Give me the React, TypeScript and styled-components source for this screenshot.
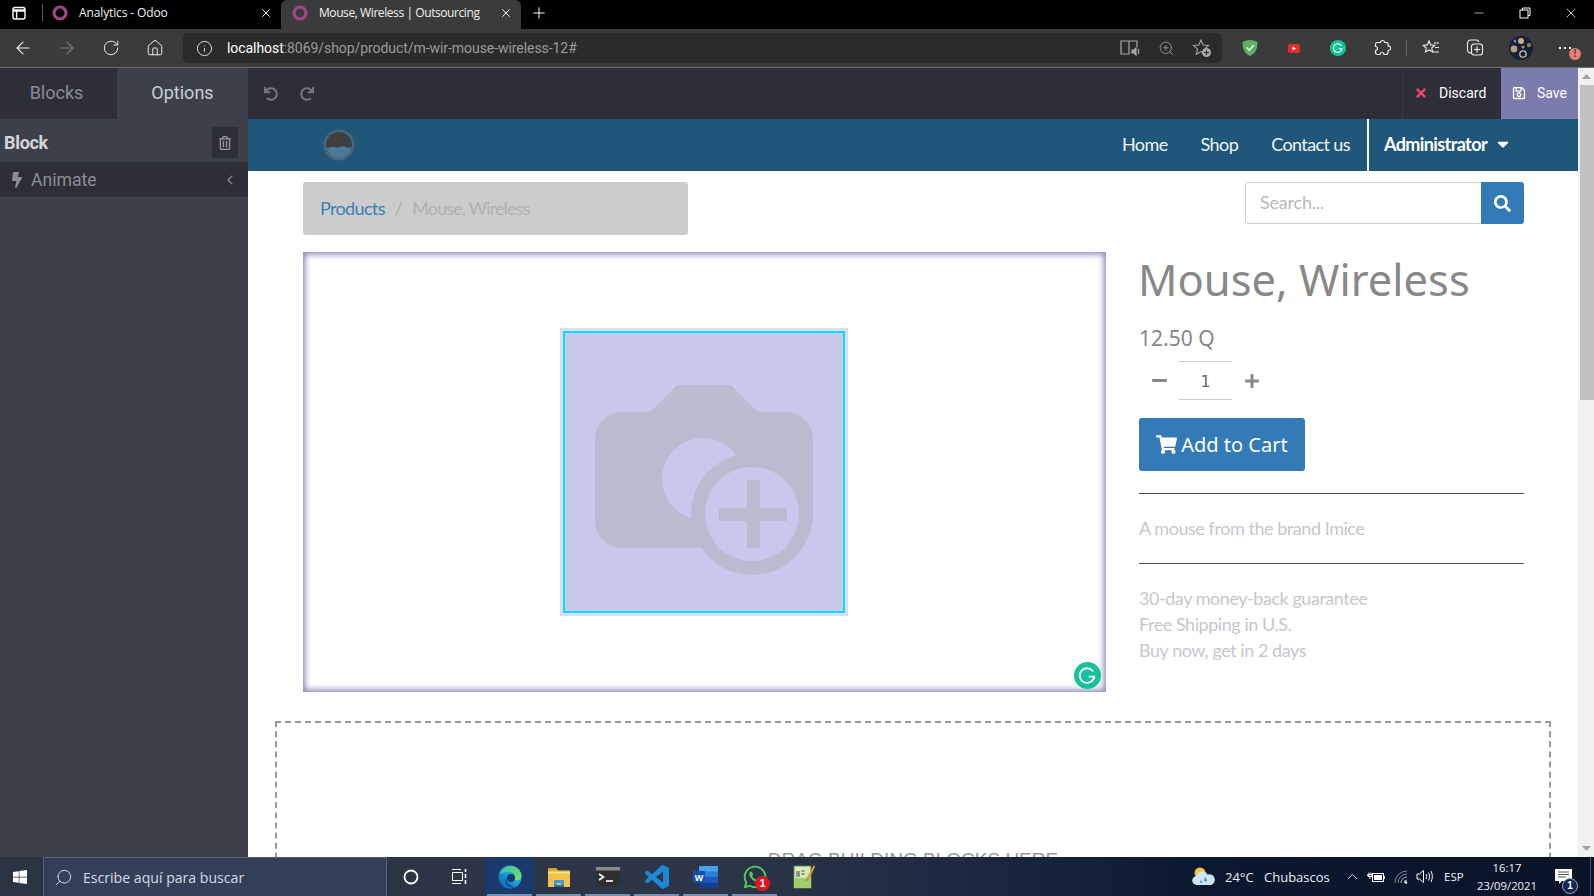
import React from "react";
import styled, { createGlobalStyle } from "styled-components";
import { ArrowLeft, ArrowRight, RotateCw, Home, Info, ZoomIn, Plus, X, Minus, Search as SearchGlass, ChevronUp, ChevronLeft } from "lucide-react";
import {
  FaRegTrashAlt, FaBolt, FaUndo, FaRedo, FaTimes, FaRegSave, FaSearch, FaMinus, FaPlus, FaShoppingCart, FaCaretDown, FaWindows, FaWhatsapp,
} from "react-icons/fa";

const Global = createGlobalStyle`
  html, body { margin: 0; padding: 0; height: 100%; overflow: hidden; background: #fff; }
  * { box-sizing: border-box; }
  #root { height: 100%; }
`;

const Screen = styled.div`
  width: 1594px; height: 896px; display: flex; flex-direction: column; overflow: hidden;
  font-family: "Open Sans", "Liberation Sans", sans-serif;
`;

/* ---------- browser tab strip ---------- */
const TabStrip = styled.div`
  height: 29px; background: #000; display: flex; align-items: stretch; color: #fff; flex: none;
`;
const SideToggle = styled.div`
  width: 42px; display: flex; align-items: center; justify-content: center; padding: 0 4px 3px 0;
`;
const StripDivider = styled.div`
  width: 1px; height: 18px; background: #555; align-self: center; margin-bottom: 3px;
`;
const BrowserTab = styled.div<{ $active?: boolean }>`
  width: ${(p) => (p.$active ? 240 : 238)}px;
  background: ${(p) => (p.$active ? "#3b3b3b" : "#000")};
  border-radius: ${(p) => (p.$active ? "6px 6px 0 0" : "0")};
  display: flex; align-items: center; padding: 0 8px 4px ${(p) => (p.$active ? 11 : 9)}px;
  font-size: 12px; gap: 11px;
`;
const TabTitle = styled.span<{ $tight?: boolean }>`
  flex: 1; white-space: nowrap; color: #f2f2f2; letter-spacing: ${(p) => (p.$tight ? -0.42 : -0.12)}px;
`;
const NewTab = styled.div`
  width: 36px; display: flex; align-items: center; justify-content: center; padding-bottom: 3px;
`;
const StripFill = styled.div`
  flex: 1;
`;
const WindowBtn = styled.div`
  width: 46px; display: flex; align-items: center; justify-content: center; padding-bottom: 3px;
`;

/* ---------- browser toolbar ---------- */
const Toolbar = styled.div`
  height: 39px; background: #3b3b3b; border-bottom: 1px solid #6e6e6e; display: flex; align-items: center; padding-left: 1px; flex: none;
`;
const ToolBtn = styled.div<{ $w?: number; $muted?: boolean }>`
  width: ${(p) => p.$w ?? 44}px; height: 30px; display: flex; align-items: center; justify-content: center; flex: none; position: relative;
  color: ${(p) => (p.$muted ? "#7c7c7c" : "#f0f0f0")};
`;
const AddressPill = styled.div`
  width: 1039px; height: 30px; margin: 0 6px; background: #2b2b2b; border-radius: 5px; display: flex; align-items: center; padding: 0 2px 0 13px; flex: none; color: #e8e8e8;
`;
const Url = styled.div`
  margin-left: 14px; font-family: Roboto, sans-serif; font-size: 14px; color: #9a9a9a; flex: 1; white-space: nowrap; letter-spacing: -0.06px;
  b { color: #fff; font-weight: 400; }
`;
const PillIcons = styled.div`
  display: flex; gap: 0; color: #a8a8a8;
`;
const PillIcon = styled.div`
  width: 36px; display: flex; justify-content: center; align-items: center;
`;
const ToolDivider = styled.div`
  width: 1px; height: 16px; background: #666; margin: 0 2px; flex: none;
`;
const AlertDot = styled.div`
  position: absolute; right: 3px; top: 15px; width: 12px; height: 12px; border-radius: 50%; background: #ea7d78; color: #3b3b3b;
  font: 700 10px/12px "Liberation Sans", sans-serif; text-align: center;
`;

/* ---------- workspace ---------- */
const Workspace = styled.div`
  flex: 1; display: flex; min-height: 0;
`;
const Sidebar = styled.aside`
  width: 248px; background: #3e4049; flex: none; font-family: Roboto, sans-serif;
`;
const SideTabs = styled.div`
  display: flex; height: 51px;
`;
const SideTab = styled.div<{ $active?: boolean }>`
  width: ${(p) => (p.$active ? 131 : 117)}px;
  background: ${(p) => (p.$active ? "#3e4049" : "#2e2e38")};
  color: ${(p) => (p.$active ? "#c8ced6" : "#8a8d93")};
  display: flex; align-items: center; justify-content: center; font-size: 18px;
  padding: 0 ${(p) => (p.$active ? 0 : 4)}px 2px 0;
`;
const BlockRow = styled.div`
  height: 43px; display: flex; align-items: center; justify-content: space-between; padding: 4px 10px 0 4px;
  font-size: 18px; font-weight: 700; color: #d4d6da; letter-spacing: -0.3px;
`;
const TrashBtn = styled.div`
  width: 26px; height: 31px; background: #2e2e38; display: flex; align-items: center; justify-content: center; color: #999;
`;
const OptionRow = styled.div`
  height: 35px; background: #2e2e38; display: flex; align-items: center; padding: 0 10px 0 9px; color: #8a8d93; font-size: 17.6px;
  span { flex: 1; margin-left: 6px; }
`;

const Main = styled.main`
  flex: 1; min-width: 0; display: flex; flex-direction: column;
`;
const EditBar = styled.div`
  height: 51px; background: #2e2e38; display: flex; align-items: stretch; color: #777; flex: none; font-family: Roboto, sans-serif;
`;
const HistoryGroup = styled.div`
  flex: 1; display: flex; align-items: center; gap: 22px; padding-left: 16px;
`;
const DiscardBtn = styled.div`
  width: 99px; border-left: 1px solid #3a3a44; display: flex; align-items: center; padding: 0 0 2px 11px; gap: 11px; color: #fff; font-size: 14px;
`;
const SaveBtn = styled.div`
  width: 77px; background: #7c7bad; display: flex; align-items: center; padding: 0 0 2px 11px; gap: 11px; color: #fff; font-size: 14px;
`;
const SiteNav = styled.nav`
  height: 52px; background: #1f5679; display: flex; align-items: stretch; flex: none; color: #f0f5f8; font-family: Lato, sans-serif; font-size: 18px; letter-spacing: -0.6px;
`;
const LogoSlot = styled.div`
  width: 107px; display: flex; align-items: center; justify-content: flex-end; margin-right: auto;
`;
const NavLink = styled.div<{ $m: number }>`
  display: flex; align-items: center; padding-bottom: 2px; margin-right: ${(p) => p.$m}px;
`;
const AdminLink = styled.div`
  width: 211px; border-left: 2px solid #fff; display: flex; align-items: center; padding: 0 0 2px 15px; font-weight: 700; color: #fff; gap: 7px;
`;

const Page = styled.div`
  flex: 1; min-height: 0; overflow: hidden; background: #fff; font-family: Lato, sans-serif;
`;
const Container = styled.div`
  padding: 11px 54px 0 55px;
`;
const TopRow = styled.div`
  display: flex; justify-content: space-between; align-items: flex-start;
`;
const Breadcrumb = styled.div`
  width: 385px; height: 53px; background: #ccc; border-radius: 3px; display: flex; align-items: center; padding: 0 0 2px 17px; font-size: 18px; color: #b0b0b0; letter-spacing: -0.65px;
  a { color: #3b7fb9; }
  i { font-style: normal; margin: 0 10px; color: #adadad; }
  span { letter-spacing: -0.88px; }
`;
const SearchBox = styled.div`
  width: 279px; height: 42px; display: flex; border-radius: 3px; overflow: hidden;
`;
const SearchInput = styled.div`
  flex: 1; border: 1px solid #ced2d8; border-right: 0; border-radius: 3px 0 0 3px; display: flex; align-items: center; padding: 0 0 2px 14px; color: #b9b9b9; font-size: 18px; letter-spacing: -0.2px;
`;
const SearchBtn = styled.div`
  width: 43px; background: #337ab7; color: #fff; display: flex; align-items: center; justify-content: center;
`;
const ProductRow = styled.div`
  display: flex; margin-top: 17px; gap: 33px;
`;
const ImageBox = styled.div`
  width: 803px; height: 440px; position: relative; display: flex; align-items: center; justify-content: center; padding-right: 2px;
  box-shadow: inset 0 0 6px 2px #8280b8;
`;
const Placeholder = styled.div`
  width: 288px; height: 288px; border: 3px solid #dddcf1; display: flex;
`;
const PlaceholderInner = styled.div`
  flex: 1; min-width: 0; border: 2px solid #00e1ff; background: #c8c8ec; display: flex;
  svg { display: block; }
`;
const GrammarlyFloat = styled.div`
  position: absolute; right: 5px; bottom: 3px; width: 27px; height: 27px;
`;
const Details = styled.div`
  flex: 1; min-width: 0;
`;
const Title = styled.h1`
  margin: 1px 0 0; font-family: "Noto Sans", sans-serif; font-weight: 400; font-size: 43.5px; line-height: 52px; color: #888; white-space: nowrap; text-indent: -1px;
`;
const Price = styled.div`
  margin-top: 19px; font-family: "Noto Sans", sans-serif; font-size: 21px; line-height: 28px; color: #888;
`;
const QtyRow = styled.div`
  display: flex; align-items: center; margin-top: 9px; color: #888;
`;
const QtyBtn = styled.div`
  width: 40px; height: 38px; display: flex; align-items: center; justify-content: center;
`;
const QtyInput = styled.div`
  width: 53px; height: 39px; border-top: 1px solid #ccc; border-bottom: 1px solid #ccc; display: flex; align-items: center; justify-content: center; padding-top: 2px; font-family: "DejaVu Sans", sans-serif; font-size: 16px; color: #666;
`;
const CartBtn = styled.div`
  width: 166px; height: 53px; margin-top: 18px; background: #337ab7; border-radius: 3px; color: #fff; display: flex; align-items: center; justify-content: center; gap: 4px; font-family: "Noto Sans", sans-serif; font-size: 20px;
`;
const Rule = styled.hr`
  margin: 22px 0 0; border: 0; border-top: 1px solid #4a4d55;
`;
const SoftText = styled.p`
  margin: 21px 0 2px; font-size: 18px; line-height: 26px; color: #c5c8cc; letter-spacing: -0.45px;
`;
const DropZone = styled.div`
  margin: 29px 27px 0 27px; height: 300px; border: 2px dashed #999; text-align: center; padding-top: 126px;
  font-family: "Liberation Sans", sans-serif; font-size: 19px; line-height: 22px; color: #999;
`;

/* ---------- scrollbar ---------- */
const ScrollTrack = styled.div`
  width: 16px; background: #f1f1f1; flex: none; display: flex; flex-direction: column; align-items: stretch;
`;
const ScrollArrow = styled.div`
  height: 17px; display: flex; align-items: center; justify-content: center;
`;
const ScrollThumb = styled.div`
  height: 315px; background: #c1c1c1; margin-left: 2px;
`;
const ScrollGap = styled.div`
  flex: 1;
`;

/* ---------- taskbar ---------- */
const Taskbar = styled.footer`
  height: 39px; flex: none; display: flex; align-items: stretch; color: #eef1f6; font-family: "Open Sans", sans-serif;
  background: linear-gradient(90deg, #2b3443 0%, #2c3648 45%, #1c2640 62%, #0c1830 75%, #0a1428 100%);
`;
const StartBtn = styled.div`
  width: 43px; display: flex; align-items: center; justify-content: center; flex: none; padding-right: 4px;
`;
const TaskSearch = styled.div`
  width: 344px; background: #34405a; border-left: 1px solid #55617a; border-right: 1px solid #55617a; border-top: 1px solid #55617a; display: flex; align-items: center; padding-left: 10px; gap: 10px; font-size: 14.1px; color: #d4dae6; flex: none;
`;
const TaskSlot = styled.div<{ $w?: number; $active?: boolean; $under?: boolean }>`
  width: ${(p) => p.$w ?? 49}px; flex: none; display: flex; align-items: center; justify-content: center; position: relative;
  background: ${(p) => (p.$active ? "#1b3a6c" : "transparent")};
  &::after {
    content: ""; display: ${(p) => (p.$under ? "block" : "none")}; position: absolute; left: 2px; right: 2px; bottom: 0; height: 2px; background: #7b8fb4;
  }
`;
const Badge = styled.div`
  position: absolute; right: 9px; bottom: 5px; width: 15px; height: 15px; border-radius: 50%; background: #e8101e; color: #fff;
  font: 700 11px/15px "Liberation Sans", sans-serif; text-align: center;
`;
const Tray = styled.div`
  display: flex; align-items: center; margin-left: auto; font-size: 13px; align-self: stretch;
`;
const TrayItem = styled.div<{ $w: number }>`
  width: ${(p) => p.$w}px; display: flex; align-items: center; justify-content: center; flex: none; white-space: nowrap;
`;
const TrayLabel = styled.div<{ $w: number; $size?: number; $ml?: number }>`
  width: ${(p) => p.$w}px; font-size: ${(p) => p.$size ?? 13}px; margin-left: ${(p) => p.$ml ?? 0}px; flex: none; white-space: nowrap;
`;
const Clock = styled.div`
  width: 90px; text-align: center; font-size: 11.3px; line-height: 18px; flex: none;
`;
const NotifySlot = styled.div`
  width: 38px; display: flex; align-items: center; justify-content: center; position: relative; align-self: stretch; padding-right: 16px;
`;
const NotifyBadge = styled.div`
  position: absolute; left: 10px; top: 21px; width: 16px; height: 16px; border-radius: 50%; background: #14284f; border: 1px solid #8fa6cf; color: #fff;
  font: 700 10px/14px "Liberation Sans", sans-serif; text-align: center;
`;
const EdgeStrip = styled.div`
  width: 4px; border-left: 1px solid #4a5468; flex: none; align-self: stretch;
`;

/* ---------- drawings ---------- */
const OdooRing = () => (
  <svg width="16" height="16" viewBox="0 0 16 16" style={{ flex: "none" }}>
    <circle cx="8" cy="8" r="6" fill="none" stroke="#a24689" strokeWidth="3.2" />
  </svg>
);
const SidePanelIcon = () => (
  <svg width="16" height="16" viewBox="0 0 16 16" fill="none" stroke="#fff" strokeWidth="1.4">
    <rect x="2" y="2.5" width="12" height="11.5" rx="2" />
    <path d="M2 5.5h12" strokeWidth="2.4" />
    <path d="M5.6 5v9" />
  </svg>
);
const RestoreIcon = () => (
  <svg width="12" height="12" viewBox="0 0 12 12" fill="none" stroke="#fff" strokeWidth="1">
    <rect x="1" y="3" width="8" height="8" />
    <path d="M3.5 3V1h7.5v7.5H9" />
  </svg>
);
const ReaderIcon = () => (
  <svg width="20" height="18" viewBox="0 0 20 18" fill="none" stroke="#a8a8a8" strokeWidth="1.2">
    <path d="M9 2H1v13h8V2zm0 0h8v6" />
    <path d="M12 11h2l2-2v7l-2-2h-2z" fill="#a8a8a8" />
    <path d="M18 10c1 1 1 4 0 5" />
  </svg>
);
const StarPlusIcon = () => (
  <svg width="20" height="20" viewBox="0 0 20 20">
    <path d="M9 2l2.2 5 5.3.5-4 3.6 1.2 5.2L9 13.6l-4.7 2.7 1.2-5.2-4-3.6L6.8 7z" fill="none" stroke="#a8a8a8" strokeWidth="1.1" />
    <circle cx="14.5" cy="14.5" r="4.5" fill="#a8a8a8" />
    <path d="M14.5 12v5M12 14.5h5" stroke="#2b2b2b" strokeWidth="1.2" />
  </svg>
);
const ShieldIcon = () => (
  <svg width="16" height="18" viewBox="0 0 16 18">
    <path d="M8 1c2.6 0 5 .7 7.5 2 0 6.5-1.5 11-7.5 14C2 14 .5 9.5.5 3 3 1.7 5.4 1 8 1z" fill="#5fb065" />
    <path d="M4.5 8.5l2.7 2.7 4.500-5" fill="none" stroke="#e8f6e8" strokeWidth="1.6" />
  </svg>
);
const YoutubeIcon = () => (
  <svg width="12" height="9" viewBox="0 0 12 9">
    <rect width="12" height="9" rx="2" fill="#e62b2b" />
    <path d="M4.5 2.5v4l3.5-2z" fill="#fff" />
  </svg>
);
const GrammarlyIcon = ({ size }: { size: number }) => (
  <svg width={size} height={size} viewBox="0 0 24 24">
    <circle cx="12" cy="12" r="12" fill="#15c39a" />
    <path d="M17 8.5A6.5 6.5 0 1 0 18 13h-5" fill="none" stroke="#fff" strokeWidth="1.6" />
  </svg>
);
const PuzzleIcon = () => (
  <svg width="18" height="18" viewBox="0 0 18 18" fill="none" stroke="#eee" strokeWidth="1.2" strokeLinejoin="round">
    <path d="M6 3.5h1.500a2 2 0 1 1 4 0H14a1.500 1.500 0 0 1 1 1V7a2.200 2.200 0 1 1 0 4.300V14a2 2 0 0 1-2 1.500h-2a2 2 0 1 0-4 0H4a2 2 0 0 1-1.500-2v-2a2 2 0 1 0 0-4V5.500A2 2 0 0 1 4 3.500z" />
  </svg>
);
const FavListIcon = () => (
  <svg width="18" height="18" viewBox="0 0 18 18" fill="none" stroke="#eee" strokeWidth="1.1">
    <path d="M7 2l1.700 3.900 4 .4-3 2.700.9 4L7 11l-3.600 2 .9-4-3-2.700 4-.4z" />
    <path d="M12 4h5M13 8.500h4M11 13h6" />
  </svg>
);
const CollectionsIcon = () => (
  <svg width="20" height="20" viewBox="0 0 20 20" fill="none" stroke="#eee" strokeWidth="1.1">
    <path d="M6 15c-2 0-3.500-1-3.500-3V5.500C2.500 3.500 4 2 6 2h5c1.500 0 2.500.8 3 2" />
    <rect x="6.5" y="6" width="11" height="11" rx="2.5" />
    <path d="M12 8.500v6M9 11.500h6" />
  </svg>
);
const AvatarIcon = () => (
  <svg width="24" height="24" viewBox="0 0 24 24">
    <circle cx="12" cy="12" r="12" fill="#14203c" />
    <circle cx="12" cy="5" r="3" fill="#c9b27a" />
    <circle cx="5" cy="13" r="3.4" fill="#b5a47a" />
    <circle cx="14" cy="18" r="3.2" fill="none" stroke="#d8c48f" strokeWidth="1.3" />
    <circle cx="20" cy="9" r="2.2" fill="#8c7a55" />
    <circle cx="6" cy="5" r="1.5" fill="#6d86a8" />
    <circle cx="14" cy="11" r="1.6" fill="#a08c60" />
  </svg>
);
const SiteLogo = () => (
  <svg width="32" height="32" viewBox="0 0 32 32">
    <circle cx="16" cy="16" r="15.5" fill="#48677f" />
    <circle cx="16" cy="16" r="13" fill="#3f3f3f" />
    <path d="M3.5 18c3 2 5-1 8 0s3 1 5 0 5-1 6 0 4 1 6 0c-.5 6-6 11-12.500 11S4 24 3.500 18z" fill="#4a7a9a" />
  </svg>
);
const CameraPlus = () => (
  <svg width="278" height="278" viewBox="2 1 278 278">
    <path d="M32 107a27 27 0 0 1 27-27h28l27-27h54l27 27h28a27 27 0 0 1 27 27v84L189 182l-51 34H59a27 27 0 0 1-27-27z" fill="#b9bbd1" />
    <circle cx="140" cy="147" r="41" fill="#c8c8ec" />
    <circle cx="189" cy="182" r="61" fill="#b9bbd1" />
    <circle cx="189" cy="182" r="47" fill="#c8c8ec" />
    <path d="M156 176h28v-28h13v28h27v13h-27v27h-13v-27h-28z" fill="#b9bbd1" />
  </svg>
);
const EdgeIcon = () => (
  <svg width="24" height="24" viewBox="0 0 24 24">
    <defs>
      <linearGradient id="edgeA" x1="0" y1="1" x2="1" y2="0">
        <stop offset="0" stopColor="#0c59a4" />
        <stop offset="0.5" stopColor="#1b9de2" />
        <stop offset="1" stopColor="#37c6d0" />
      </linearGradient>
      <linearGradient id="edgeB" x1="0" y1="0" x2="1" y2="1">
        <stop offset="0" stopColor="#33c6a0" />
        <stop offset="1" stopColor="#7ee06a" />
      </linearGradient>
    </defs>
    <circle cx="12" cy="12" r="11.5" fill="url(#edgeA)" />
    <path d="M2 9C5 2 13-1 19 3c4 3 5 7 4 10-1 3-6 3-7 1 2-2 1-6-3-7-5-1-8 1-11 2z" fill="url(#edgeB)" />
    <circle cx="13" cy="13" r="4" fill="#1b3a6c" />
    <path d="M17 22c-5 2-10-1-10-6 0-1 .5-2 1-3 0 5 5 8 9 9z" fill="#0a4f9c" />
  </svg>
);
const FolderIcon = () => (
  <svg width="24" height="22" viewBox="0 0 24 22">
    <path d="M1 2h8l2 2.5h12V21H1z" fill="#f3c24f" />
    <path d="M1 2h8l2 2.5H1z" fill="#d99a1f" />
    <rect x="1" y="6" width="22" height="1.5" fill="#ffe08a" />
    <path d="M7 19v-5h10v5h-3v-2h-4v2z" fill="#3f9be0" />
    <rect x="7" y="19" width="10" height="2" fill="#1f6fb8" />
  </svg>
);
const TerminalIcon = () => (
  <svg width="24" height="19" viewBox="0 0 24 19">
    <rect width="24" height="19" fill="#2f2f2f" />
    <rect width="24" height="3.5" fill="#8a8a8a" />
    <path d="M3 7l4.500 3L3 13" fill="none" stroke="#fff" strokeWidth="1.6" />
    <path d="M10 14h7" stroke="#fff" strokeWidth="1.6" />
  </svg>
);
const VsCodeIcon = () => (
  <svg width="24" height="24" viewBox="0 0 24 24">
    <path fill="#1a8ad6" d="M23.150 2.587L18.210.21a1.494 1.494 0 0 0-1.705.29l-9.460 8.630-4.120-3.128a.999.999 0 0 0-1.276.057L.327 7.261A1 1 0 0 0 .326 8.740L3.899 12 .326 15.260a1 1 0 0 0 .001 1.479L1.650 17.940a.999.999 0 0 0 1.276.057l4.120-3.128 9.460 8.630a1.492 1.492 0 0 0 1.704.29l4.942-2.377A1.500 1.500 0 0 0 24 20.060V3.939a1.500 1.500 0 0 0-.85-1.352zm-5.146 14.861L10.826 12l7.178-5.448v10.896z" />
  </svg>
);
const WordLetter = styled.text`
  font: 700 9px "Liberation Sans", sans-serif; fill: #fff;
`;
const WordIcon = () => (
  <svg width="25" height="22" viewBox="0 0 25 22">
    <rect x="6" y="0" width="19" height="22" rx="1" fill="#2b7cd3" />
    <rect x="6" y="0" width="19" height="5.5" fill="#41a5ee" />
    <rect x="6" y="11" width="19" height="5.5" fill="#185abd" />
    <rect x="6" y="16.5" width="19" height="5.5" fill="#103f91" />
    <rect x="0" y="5" width="12" height="12" rx="1" fill="#1550a8" />
    <WordLetter x="1.8" y="14.5">W</WordLetter>
  </svg>
);
const NotepadIcon = () => (
  <svg width="22" height="25" viewBox="0 0 22 25">
    <rect x="1" y="2" width="17" height="22" fill="#d8ecb8" stroke="#6b7a5a" strokeWidth="1" />
    <rect x="1" y="14" width="17" height="10" fill="#9ed06c" />
    <path d="M4 7v6M6 7v6M8.500 7h3M8.500 10h3" stroke="#444" strokeWidth="1" />
    <path d="M21 1l-7 13-1 3 2.500-2L22 3z" fill="#f2b632" stroke="#8a6514" strokeWidth=".5" />
  </svg>
);
const WeatherIcon = () => (
  <svg width="24" height="20" viewBox="0 0 24 20">
    <circle cx="8" cy="6" r="5.5" fill="#f6c244" />
    <path d="M5 18a4.500 4.500 0 0 1-.5-9 6 6 0 0 1 11-1.500A5.200 5.200 0 0 1 19 18z" fill="#cfe4f7" />
    <path d="M13.500 10l-1.500 3a1.500 1.500 0 0 0 3 0zM9 13l-1 2a1 1 0 0 0 2 0z" fill="#3c8ee0" />
  </svg>
);
const PowerIcon = () => (
  <svg width="18" height="12" viewBox="0 0 18 12" fill="none" stroke="#fff" strokeWidth="1">
    <path d="M0 4h3M2 1.500v2M4 1.500v2M1 3.500h4v2H1zM3 5.500V8" />
    <rect x="5.5" y="2.5" width="11" height="8" />
    <rect x="7" y="4" width="8" height="5" fill="#fff" stroke="none" />
    <rect x="16.5" y="5" width="1.5" height="3" fill="#fff" stroke="none" />
  </svg>
);
const WifiIcon = () => (
  <svg width="14" height="14" viewBox="0 0 14 14" fill="none" stroke="#e6e6e6" strokeWidth="1">
    <path d="M1 13A12 12 0 0 1 13 1M4 13a9 9 0 0 1 9-9" opacity=".55" />
    <path d="M7 13a6 6 0 0 1 6-6M10 13a3 3 0 0 1 3-3" opacity=".75" />
    <circle cx="12" cy="12.5" r="1.2" fill="#fff" stroke="none" />
  </svg>
);
const SpeakerIcon = () => (
  <svg width="17" height="15" viewBox="0 0 17 15" fill="none" stroke="#fff" strokeWidth="1">
    <path d="M1 5h2.500L7.500 1.500v12L3.500 10H1z" />
    <path d="M10 5c.8 1.500.8 3.500 0 5M12.500 3.500c1.300 2.500 1.300 5.500 0 8M15 2c1.800 3.500 1.800 7.500 0 11" />
  </svg>
);
const NoteIcon = () => (
  <svg width="17" height="16" viewBox="0 0 17 16">
    <path d="M0 0h17v12H7l-3 3v-3H0z" fill="#fff" />
    <path d="M3 3h11M3 5.500h11M3 8h8" stroke="#555" strokeWidth="1" />
  </svg>
);
const ScrollTriangle = ({ down }: { down?: boolean }) => (
  <svg width="9" height="5" viewBox="0 0 9 5">
    <path d={down ? "M0 0h9L4.500 5z" : "M0 5h9L4.500 0z"} fill="#a3a3a3" />
  </svg>
);
const MirroredGlass = styled(SearchGlass)`
  transform: scaleX(-1); flex: none;
`;

export default function App() {
  return (
    <>
      <Global />
      <Screen>
        <TabStrip>
          <SideToggle><SidePanelIcon /></SideToggle>
          <StripDivider />
          <BrowserTab>
            <OdooRing />
            <TabTitle>Analytics - Odoo</TabTitle>
            <X size={14} strokeWidth={1.6} />
          </BrowserTab>
          <BrowserTab $active>
            <OdooRing />
            <TabTitle $tight>Mouse, Wireless | Outsourcing</TabTitle>
            <X size={14} strokeWidth={1.6} />
          </BrowserTab>
          <NewTab><Plus size={18} strokeWidth={1.3} /></NewTab>
          <StripFill />
          <WindowBtn><Minus size={14} strokeWidth={1.1} /></WindowBtn>
          <WindowBtn><RestoreIcon /></WindowBtn>
          <WindowBtn><X size={16} strokeWidth={1.1} /></WindowBtn>
        </TabStrip>

        <Toolbar>
          <ToolBtn><ArrowLeft size={20} strokeWidth={1.3} /></ToolBtn>
          <ToolBtn $muted><ArrowRight size={20} strokeWidth={1.3} /></ToolBtn>
          <ToolBtn><RotateCw size={18} strokeWidth={1.3} /></ToolBtn>
          <ToolBtn><Home size={18} strokeWidth={1.3} /></ToolBtn>
          <AddressPill>
            <Info size={17} strokeWidth={1.3} />
            <Url><b>localhost</b>:8069/shop/product/m-wir-mouse-wireless-12#</Url>
            <PillIcons>
              <PillIcon><ReaderIcon /></PillIcon>
              <PillIcon><ZoomIn size={17} strokeWidth={1.1} /></PillIcon>
              <PillIcon><StarPlusIcon /></PillIcon>
            </PillIcons>
          </AddressPill>
          <ToolBtn><ShieldIcon /></ToolBtn>
          <ToolBtn><YoutubeIcon /></ToolBtn>
          <ToolBtn><GrammarlyIcon size={16} /></ToolBtn>
          <ToolBtn><PuzzleIcon /></ToolBtn>
          <ToolDivider />
          <ToolBtn><FavListIcon /></ToolBtn>
          <ToolBtn><CollectionsIcon /></ToolBtn>
          <ToolBtn $w={48}><AvatarIcon /></ToolBtn>
          <ToolBtn $w={39}>
            <svg width="14" height="4" viewBox="0 0 14 4"><path d="M1 2h2M6 2h2M11 2h2" stroke="#fff" strokeWidth="2" /></svg>
            <AlertDot>!</AlertDot>
          </ToolBtn>
        </Toolbar>

        <Workspace>
          <Sidebar>
            <SideTabs>
              <SideTab>Blocks</SideTab>
              <SideTab $active>Options</SideTab>
            </SideTabs>
            <BlockRow>
              Block
              <TrashBtn><FaRegTrashAlt size={14} /></TrashBtn>
            </BlockRow>
            <OptionRow>
              <FaBolt size={16} />
              <span>Animate</span>
              <ChevronLeft size={16} strokeWidth={1.6} />
            </OptionRow>
          </Sidebar>

          <Main>
            <EditBar>
              <HistoryGroup>
                <FaUndo size={14} />
                <FaRedo size={14} />
              </HistoryGroup>
              <DiscardBtn>
                <FaTimes size={14} color="#e2485f" />
                Discard
              </DiscardBtn>
              <SaveBtn>
                <FaRegSave size={14} />
                Save
              </SaveBtn>
            </EditBar>
            <SiteNav>
              <LogoSlot><SiteLogo /></LogoSlot>
              <NavLink $m={33}>Home</NavLink>
              <NavLink $m={33}>Shop</NavLink>
              <NavLink $m={17}>Contact us</NavLink>
              <AdminLink>
                Administrator
                <FaCaretDown size={18} />
              </AdminLink>
            </SiteNav>
            <Page>
              <Container>
                <TopRow>
                  <Breadcrumb><a>Products</a><i>/</i><span>Mouse, Wireless</span></Breadcrumb>
                  <SearchBox>
                    <SearchInput>Search...</SearchInput>
                    <SearchBtn><FaSearch size={17} /></SearchBtn>
                  </SearchBox>
                </TopRow>
                <ProductRow>
                  <ImageBox>
                    <Placeholder>
                      <PlaceholderInner><CameraPlus /></PlaceholderInner>
                    </Placeholder>
                    <GrammarlyFloat><GrammarlyIcon size={27} /></GrammarlyFloat>
                  </ImageBox>
                  <Details>
                    <Title>Mouse, Wireless</Title>
                    <Price>12.50 Q</Price>
                    <QtyRow>
                      <QtyBtn><FaMinus size={17} /></QtyBtn>
                      <QtyInput>1</QtyInput>
                      <QtyBtn><FaPlus size={16} /></QtyBtn>
                    </QtyRow>
                    <CartBtn><FaShoppingCart size={21} />Add to Cart</CartBtn>
                    <Rule />
                    <SoftText>A mouse from the brand Imice</SoftText>
                    <Rule />
                    <SoftText>30-day money-back guarantee<br />Free Shipping in U.S.<br />Buy now, get in 2 days</SoftText>
                  </Details>
                </ProductRow>
              </Container>
              <DropZone>DRAG BUILDING BLOCKS HERE</DropZone>
            </Page>
          </Main>

          <ScrollTrack>
            <ScrollArrow><ScrollTriangle /></ScrollArrow>
            <ScrollThumb />
            <ScrollGap />
            <ScrollArrow><ScrollTriangle down /></ScrollArrow>
          </ScrollTrack>
        </Workspace>

        <Taskbar>
          <StartBtn><FaWindows size={16} color="#fff" /></StartBtn>
          <TaskSearch>
            <MirroredGlass size={19} strokeWidth={1.2} />
            Escribe aquí para buscar
          </TaskSearch>
          <TaskSlot $w={47}>
            <svg width="16" height="16" viewBox="0 0 16 16"><circle cx="8" cy="8" r="6.5" fill="none" stroke="#fff" strokeWidth="1.8" /></svg>
          </TaskSlot>
          <TaskSlot $w={51}>
            <svg width="17" height="17" viewBox="0 0 17 17" fill="none" stroke="#fff" strokeWidth="1">
              <path d="M1 1.500h9M1 15.500h9" /><rect x="1.5" y="4.5" width="10" height="8" /><path d="M14.500 1v3M14.500 6v4M14.500 12v4" strokeWidth="1.6" />
            </svg>
          </TaskSlot>
          <TaskSlot $active $under><EdgeIcon /></TaskSlot>
          <TaskSlot $under><FolderIcon /></TaskSlot>
          <TaskSlot $under><TerminalIcon /></TaskSlot>
          <TaskSlot $under><VsCodeIcon /></TaskSlot>
          <TaskSlot $under><WordIcon /></TaskSlot>
          <TaskSlot $under><FaWhatsapp size={26} color="#4fce5d" /><Badge>1</Badge></TaskSlot>
          <TaskSlot><NotepadIcon /></TaskSlot>
          <Tray>
            <TrayItem $w={30}><WeatherIcon /></TrayItem>
            <TrayLabel $w={39} $ml={6}>24°C</TrayLabel>
            <TrayLabel $w={77}>Chubascos</TrayLabel>
            <TrayItem $w={22}><ChevronUp size={17} strokeWidth={1.3} /></TrayItem>
            <TrayItem $w={26}><PowerIcon /></TrayItem>
            <TrayItem $w={24}><WifiIcon /></TrayItem>
            <TrayItem $w={22}><SpeakerIcon /></TrayItem>
            <TrayLabel $w={18} $ml={9} $size={11.5}>ESP</TrayLabel>
            <Clock>16:17<br />23/09/2021</Clock>
            <NotifySlot><NoteIcon /><NotifyBadge>1</NotifyBadge></NotifySlot>
            <EdgeStrip />
          </Tray>
        </Taskbar>
      </Screen>
    </>
  );
}
